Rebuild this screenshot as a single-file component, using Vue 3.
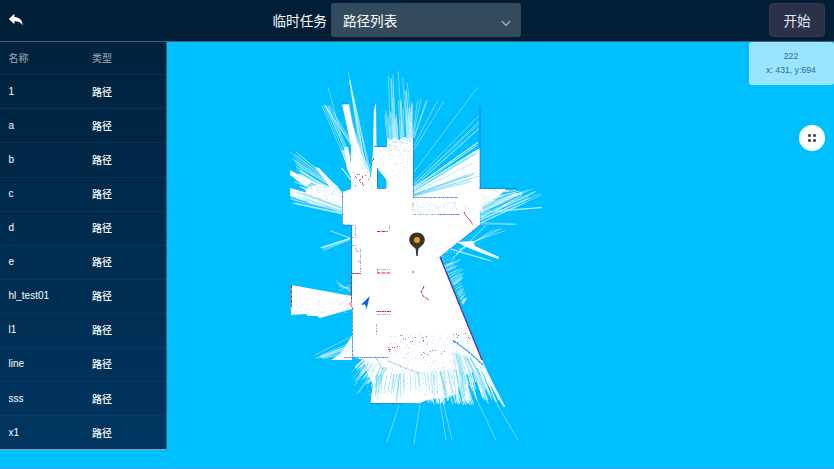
<script setup>
const names = ['1', 'a', 'b', 'c', 'd', 'e', 'hl_test01', 'l1', 'line', 'sss', 'x1']

let seed = 1234567
function rnd() {
  seed = (seed * 1103515245 + 12345) % 2147483648
  return seed / 2147483648
}
const f = (n) => n.toFixed(1)

// Laser rays running from segment a-b to segment c-d; `vary` shortens each one at random.
function fan(a, b, c, d, n, vary) {
  let p = ''
  for (let i = 0; i < n; i++) {
    const t = n === 1 ? 0 : rnd()
    const u = Math.min(1, Math.max(0, t + (rnd() - 0.5) * 0.08))
    const x1 = a[0] + (b[0] - a[0]) * t
    const y1 = a[1] + (b[1] - a[1]) * t
    const k = 1 - rnd() * vary
    const x2 = x1 + (c[0] + (d[0] - c[0]) * u - x1) * k
    const y2 = y1 + (c[1] + (d[1] - c[1]) * u - y1) * k
    p += `M${f(x1)} ${f(y1)}L${f(x2)} ${f(y2)}`
  }
  return p
}

// Scattered one-pixel readings inside a box.
function dots(x, y, w, h, n) {
  let p = ''
  for (let i = 0; i < n; i++) {
    p += `M${Math.floor(x + rnd() * w)} ${Math.floor(y + rnd() * h)}h1v1h-1z`
  }
  return p
}

const areas = [
  // main hall
  '342,192 351,189 480,189 480,225 440,257 482,360 470,366 440,372 385,372 364,360 352,357 352,225 342,225',
  // upper left wedge and spike
  '342,104 349,104 353,125 370,173 372,191 351,191 351,146 348,132',
  '374,104 376,104 377,191 370,191 373,150',
  // upper block
  '374,147 387,147 387,138 391,140 395,137 399,140 405,137 409,139 413,138 413,192 374,192',
  // right fan core
  '413,190 480,148 480,192 413,198',
  '480,189 506,189 495,200 480,211',
  // left fan core
  '315,167 319,168 342,192 342,214 330,208 310,204 303,198 308,187 321,184 330,187',
  '290,170 312,182 306,187 290,175',
  '290,188 308,193 314,203 290,196',
  '344,147 348,147 351,166 351,178 347,169',
  // west corridor
  '291,285 352,296 352,309 320,318 317,316 308,316 306,314 291,315',
  // south-west corner
  '352,336 352,360 331,360 340,354',
  // east spur
  '456,242 473,241 475,246 499,257 498,259 471,249',
  // south room
  '364,357 470,357 464,376 459,386 457,394 445,398 430,399 420,403 402,403 371,403 373,385 366,369',
  '440,350 482,357 482,362 476,370 464,376 445,380',
]
const faint = [
  fan([365, 165], [365, 165], [321, 104], [329, 104], 5, 0.05),
  fan([347, 165], [352, 158], [321, 104], [327, 104], 6, 0.05),
  fan([341, 135], [341, 135], [328, 87], [328, 87], 1, 0),
  fan([360, 155], [372, 175], [347, 63], [351, 88], 9, 0.2),
  fan([388, 142], [413, 142], [386, 66], [407, 72], 17, 0.45),
  fan([387, 142], [413, 142], [383, 110], [413, 100], 24, 0.6),
  fan([408, 142], [412, 142], [408, 110], [413, 98], 8, 0.2),
  fan([413, 133], [413, 152], [416, 98], [446, 98], 6, 0.1),
  fan([413, 173], [413, 173], [478, 87], [478, 87], 1, 0),
  fan([413, 182], [413, 190], [479, 114], [479, 136], 5, 0),
  fan([338, 187], [345, 198], [290, 147], [290, 180], 18, 0.25),
  fan([342, 215], [342, 205], [290, 205], [290, 188], 14, 0.15),
  fan([350, 238], [350, 240], [320, 247], [322, 252], 7, 0.2),
  fan([350, 238], [350, 238], [329, 229], [331, 232], 2, 0),
  fan([350, 292], [350, 285], [336, 280], [338, 292], 5, 0.2),
  fan([478, 210], [481, 224], [532, 188], [546, 194], 18, 0.5),
  fan([476, 214], [480, 210], [544, 207], [544, 208], 3, 0.04),
  fan([470, 225], [478, 222], [519, 225], [519, 224], 2, 0.1),
  fan([450, 262], [465, 242], [483, 222], [517, 230], 6, 0.2),
  fan([450, 250], [452, 248], [496, 263], [490, 260], 3, 0.2),
  fan([442, 262], [463, 305], [462, 254], [467, 298], 50, 0.6),
  fan([352, 336], [352, 353], [309, 358], [320, 359], 12, 0.2),
  fan([364, 359], [372, 374], [351, 373], [354, 401], 9, 0.35),
  fan([399, 405], [399, 405], [387, 442], [387, 442], 1, 0),
  fan([420, 404], [420, 404], [414, 444], [414, 444], 1, 0),
  fan([440, 402], [440, 402], [446, 440], [446, 440], 1, 0),
  fan([443, 402], [443, 402], [452, 440], [452, 440], 1, 0),
  fan([465, 375], [465, 375], [496, 440], [496, 440], 1, 0),
  fan([474, 365], [474, 365], [518, 440], [518, 440], 1, 0),
]
const bright = [
  fan([375, 370], [464, 370], [371, 403], [474, 406], 110, 0.15),
  fan([362, 360], [392, 368], [354, 367], [373, 395], 45, 0.45),
  fan([458, 355], [480, 356], [468, 406], [505, 408], 45, 0.5),
  fan([476, 366], [482, 358], [504, 408], [505, 406], 6, 0.05),
  fan([413, 188], [413, 195], [479, 140], [479, 165], 25, 0.03),
  fan([477, 192], [482, 219], [515, 190], [529, 192], 20, 0.5),
  fan([347, 168], [351, 166], [338, 146], [348, 150], 5, 0.3),
  fan([351, 180], [351, 180], [340, 167], [342, 168], 2, 0),
  fan([330, 190], [338, 198], [291, 162], [292, 190], 12, 0.3),
]
const shade = [
  fan([413, 191], [414, 196], [479, 147], [479, 180], 15, 0.2),
  fan([376, 375], [462, 370], [371, 403], [470, 404], 42, 0.65),
  fan([452, 352], [472, 358], [462, 400], [488, 385], 18, 0.6),
  fan([368, 362], [388, 368], [360, 377], [375, 395], 12, 0.6),
  fan([482, 205], [484, 218], [512, 190], [520, 194], 14, 0.45),
  fan([342, 214], [342, 205], [290, 200], [290, 183], 7, 0.3),
  fan([356, 138], [370, 178], [349, 106], [352, 122], 4, 0.3),
]
const speckle = [
  dots(388, 139, 25, 12, 42),
  dots(388, 139, 25, 46, 45),
  dots(353, 164, 17, 24, 26),
  dots(309, 184, 33, 18, 55),
  dots(293, 299, 55, 15, 30),
  dots(390, 334, 83, 38, 190),
  dots(366, 367, 90, 30, 150),
  dots(412, 202, 58, 12, 75),
  dots(442, 252, 15, 18, 45),
  dots(482, 190, 24, 12, 30),
  dots(378, 190, 35, 2, 5),
].join('')
const redDots = [
  dots(355, 174, 15, 12, 16),
  dots(372, 158, 3, 3, 4),
  dots(387, 346, 11, 8, 9),
  dots(452, 332, 20, 9, 7),
  dots(410, 334, 20, 6, 2),
].join('')
const blueDots = [
  dots(400, 335, 30, 8, 9),
  dots(416, 350, 30, 5, 9),
  dots(453, 340, 5, 3, 5),
].join('')
</script>

<template>
  <div class="page">
    <header class="bar">
      <svg class="back" viewBox="0 0 16 14">
        <path d="M.8 6 6.400.8v3.100c5.200.2 8.200 3.400 8.200 8.500-1.600-3-3.800-4.300-8.200-4.200v3.100z" />
      </svg>
      <div class="task">
        <span class="label">临时任务</span>
        <div class="select">
          <span>路径列表</span>
          <svg class="chevron" viewBox="0 0 10 7"><path d="M.8 1 5 5.400 9.200 1" /></svg>
        </div>
      </div>
      <button class="start">开始</button>
    </header>

    <main class="stage">
      <svg class="map" viewBox="0 42 834 426">
        <polygon v-for="(p, i) in areas" :key="'a' + i" class="white" :points="p" />
        <path class="hole" d="M377 168L386.500 180V188.500H377z" />
        <path v-for="(d, i) in faint" :key="'f' + i" class="faint" :d="d" />
        <path v-for="(d, i) in bright" :key="'b' + i" class="bright" :d="d" />
        <path v-for="(d, i) in shade" :key="'s' + i" class="shade" :d="d" />
        <path class="speckle" :d="speckle" />
        <path class="blue-dots" :d="blueDots" />
        <path class="red-dots" :d="redDots" />

        <path class="wall" d="M342.500 192V225H351M351.500 225V274M342 104H349M374.500 104V109M413.500 138V197M480 106V189M479.500 188.500H517M480 225L440 257M352.500 308V357M344.500 357.500H388M374 146.500H386M377.500 168V188.500H386M413 197.500H458M440 214.500H460M371 403.500H402" />
        <path class="lines" d="M351 225.500H355.500V237.500H351M346 245L350 243M352 245.500H356V251M360.500 249V273M356 251.500H360M358 261.500H361M389.500 226V231M377 269.500H390M377 314.500H390M376.500 324V336M377.500 270V273M388 361L407 369 423 374M376 358L383 369M413 214.500H440M413 203V211" />
        <path class="teal" d="M454 341L461 346 470 353 483 365" />
        <path class="red" d="M377 231.500H388M377 273H390.500M376.500 311.500H391M351.500 273.500H361M351.500 276V303M291.500 285V307M464 212L466 216 469 219 473 225M413 271V273M424 286L423 289 421 291 423 296 426 298 429 300M350 303L353 309" />
        <path class="edge" d="M440 257L482 360" />
        <path class="edge-red" d="M440 257L482 360" />

        <path class="robot" d="M369.800 296L361 304.800 365 304.500 366.700 308.800z" />
        <g class="pin">
          <path d="M417 232.500c-4.300 0-7.800 3.200-7.800 7.300 0 4.300 4 6.700 6.500 9.300L416.300 256H417.700L418.300 249.100c2.500-2.600 6.500-5 6.500-9.300 0-4.100-3.500-7.300-7.800-7.300z" />
          <circle cx="417" cy="240" r="3" />
        </g>
      </svg>

      <aside class="list">
        <div class="row head"><span>名称</span><span>类型</span></div>
        <div v-for="name in names" :key="name" class="row">
          <span>{{ name }}</span><span>路径</span>
        </div>
      </aside>

      <div class="overlay">
        <div class="info"><div>222</div><div>x: 431, y:694</div></div>
        <button class="tools"><i /><i /><i /><i /></button>
      </div>
    </main>
  </div>
</template>

<style>
body {
  background: #2fb0dc;
}
</style>

<style scoped>
.page {
  width: 834px;
  height: 469px;
  box-sizing: border-box;
  padding-bottom: 1px;
  display: flex;
  flex-direction: column;
  overflow: hidden;
  font-family: "Liberation Sans", "Noto Sans CJK SC", sans-serif;
  color: #fff;
}
.bar {
  flex: 0 0 42px;
  box-sizing: border-box;
  display: grid;
  grid-template-columns: 272.5px 1fr auto;
  align-items: center;
  padding: 0 9px 1px 0;
  background: #001e36;
  border-bottom: 1px solid #46637a;
}
.back {
  width: 16px;
  height: 14px;
  margin-left: 8px;
  fill: #fff;
}
.task {
  display: flex;
  align-items: center;
  gap: 4px;
  font-size: 13.6px;
}
.select {
  width: 190px;
  height: 34px;
  box-sizing: border-box;
  padding: 0 10px 0 12px;
  display: flex;
  align-items: center;
  justify-content: space-between;
  border-radius: 3px;
  background: #344b5e;
}
.chevron {
  width: 10px;
  height: 7px;
  margin-top: 7px;
  fill: none;
  stroke: #b1bac2;
  stroke-width: 1.1;
}
.start {
  width: 56px;
  height: 34px;
  padding: 0;
  border: 1px solid #343b55;
  border-radius: 4px;
  background: #2a3148;
  color: #e2e5f2;
  font: inherit;
  font-size: 13.6px;
}
.stage {
  position: relative;
  flex: 1;
  min-height: 0;
  display: flex;
  justify-content: space-between;
  align-items: flex-start;
  background: #00bfff;
}
.map {
  position: absolute;
  inset: 0;
  width: 834px;
  height: 426px;
}
.list {
  position: relative;
  width: 167px;
  height: 408px;
  box-sizing: border-box;
  border-right: 1px solid #27658a;
  border-bottom: 1px solid #7fa6bd;
  background: linear-gradient(#00223e, #003660);
  font-size: 10px;
  font-weight: 500;
}
.row {
  height: 34.09px;
  box-sizing: border-box;
  display: grid;
  grid-template-columns: 83.5px 1fr;
  align-items: center;
  padding: 0 0 1px 8.5px;
  border-bottom: 1px solid rgba(30, 85, 125, 0.25);
}
.row.head {
  height: 33.3px;
  padding-bottom: 2px;
  color: #8d9aa6;
}
.row:last-child {
  height: 33.5px;
  border-bottom: 0;
}
.overlay {
  position: relative;
  display: flex;
  flex-direction: column;
  align-items: flex-end;
  gap: 40px;
}
.info {
  width: 85px;
  height: 43px;
  box-sizing: border-box;
  padding: 7px 1px 0 0;
  border-radius: 3px;
  background: #99e5ff;
  color: #366b87;
  font-size: 8.7px;
  line-height: 14px;
  text-align: center;
}
.tools {
  width: 26px;
  height: 26px;
  margin-right: 9px;
  padding: 0;
  border: 0;
  border-radius: 50%;
  background: #fff;
  display: grid;
  grid-template-columns: 3.5px 3.5px;
  grid-auto-rows: 3px;
  gap: 2px 1.5px;
  place-content: center;
}
.tools i {
  border-radius: 1px;
  background: #554d5d;
}
.white {
  fill: #fff;
}
.hole {
  fill: #00bfff;
}
.bright,
.faint,
.shade,
.wall,
.lines,
.red,
.teal,
.edge,
.edge-red {
  fill: none;
}
.bright {
  stroke: #fff;
  stroke-width: 0.9;
  stroke-opacity: 0.85;
}
.faint {
  stroke: #e2f6ff;
  stroke-width: 0.65;
  stroke-opacity: 0.72;
}
.shade {
  stroke: #55cff2;
  stroke-width: 0.6;
  stroke-opacity: 0.75;
}
.speckle {
  fill: #b4d6f5;
  fill-opacity: 0.65;
}
.blue-dots {
  fill: #5f86dc;
}
.red-dots {
  fill: #d14260;
}
.wall {
  stroke: #245bd0;
  stroke-width: 0.8;
  stroke-dasharray: 2 0.7 1 0.5;
}
.lines {
  stroke: #6597d8;
  stroke-width: 0.7;
  stroke-dasharray: 3 1 1 1;
}
.teal {
  stroke: #2c9acb;
  stroke-width: 1.2;
  stroke-dasharray: 3 0.5;
}
.red {
  stroke: #c41f50;
  stroke-width: 1;
  stroke-dasharray: 3 0.5 1 0.6;
}
.edge {
  stroke: #1b45b5;
  stroke-width: 1.2;
}
.edge-red {
  stroke: #c22563;
  stroke-width: 1.1;
  stroke-dasharray: 3 2 1 3;
}
.robot {
  fill: #0863e8;
}
.pin path {
  fill: #383431;
}
.pin circle {
  fill: #e79b22;
}
</style>
